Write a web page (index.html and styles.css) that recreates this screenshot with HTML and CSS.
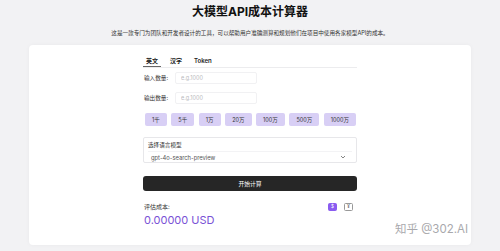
FILE: index.html
```html
<!DOCTYPE html>
<html lang="zh-CN">
<head>
    <meta charset="UTF-8">
    <meta name="viewport" content="width=device-width, initial-scale=1.0">
    <title>大模型API成本计算器</title>
    <link rel="stylesheet" href="styles.css">
</head>
<body>
    <div class="page">
        <header class="header">
            <h1>大模型API成本计算器</h1>
            <p class="intro">这是一款专门为团队和开发者设计的工具，可以帮助用户准确测算和规划他们在项目中使用各家模型API的成本。</p>
        </header>

        <div class="card">
            <div class="calc">
                <div class="tabs">
                    <span class="tab active">英文</span>
                    <span class="tab">汉字</span>
                    <span class="tab">Token</span>
                </div>

                <div class="field">
                    <label for="input-count">输入数量:</label>
                    <input id="input-count" type="text" placeholder="e.g.1000">
                </div>
                <div class="field">
                    <label for="output-count">输出数量:</label>
                    <input id="output-count" type="text" placeholder="e.g.1000">
                </div>

                <div class="presets">
                    <button class="preset">1千</button>
                    <button class="preset">5千</button>
                    <button class="preset">1万</button>
                    <button class="preset">20万</button>
                    <button class="preset">100万</button>
                    <button class="preset">500万</button>
                    <button class="preset">1000万</button>
                </div>

                <div class="model-box">
                    <span class="model-label">选择语言模型</span>
                    <div class="model-select">
                        <span>gpt-4o-search-preview</span>
                        <svg class="chevron" width="6" height="4" viewBox="0 0 6 4"><path d="M1 1l2 2 2-2" fill="none" stroke="#777" stroke-width="0.9"/></svg>
                    </div>
                </div>

                <button class="start-btn">开始计算</button>

                <div class="result">
                    <div class="result-text">
                        <span class="result-label">评估成本:</span>
                        <span class="result-value">0.00000 USD</span>
                    </div>
                    <div class="currency">
                        <span class="cur active">$</span>
                        <span class="cur">¥</span>
                    </div>
                </div>
            </div>
        </div>

        <div class="watermark">知乎 @302.AI</div>
    </div>
</body>
</html>
```

FILE: styles.css
```css
* {
    margin: 0;
    padding: 0;
    box-sizing: border-box;
}

:root {
    --bg: #f2f2f4;
    --surface: #ffffff;
    --text: #222222;
    --muted: #b9b9bd;
    --border: #ececee;
    --purple: #7a52d6;
    --purple-light: #d8cff5;
}

body {
    font-family: Inter, "Noto Sans CJK SC", sans-serif;
    color: var(--text);
    background: var(--bg);
    width: 500px;
    height: 251px;
    overflow: hidden;
}

.page {
    position: relative;
    height: 251px;
}

.header {
    text-align: center;
    padding-top: 4px;
}

.header h1 {
    font-size: 12px;
    font-weight: 700;
    line-height: 16px;
    color: #111;
}

.intro {
    font-size: 5.6px;
    line-height: 8px;
    margin-top: 9px;
    color: #333;
}

.card {
    margin: 8px 29px 0;
    height: 200px;
    background: var(--surface);
    border-radius: 4px;
    box-shadow: 0 0 4px rgba(0, 0, 0, 0.04);
    padding: 10px 0 0;
}

.calc {
    width: 214px;
    margin: 0 auto;
    display: flex;
    flex-direction: column;
}

.tabs {
    display: flex;
    gap: 6px;
    border-bottom: 1px solid var(--border);
    height: 13px;
}

.tab {
    font-size: 6px;
    font-weight: 600;
    line-height: 12px;
    padding: 0 3px;
    color: #222;
}

.tab.active {
    border-bottom: 1px solid #666;
}

.field {
    display: flex;
    align-items: center;
    gap: 6px;
    margin-top: 4px;
    height: 12px;
    padding-left: 1px;
}

.field + .field {
    margin-top: 8px;
}

.field label {
    font-size: 5.6px;
    color: #333;
    width: 25px;
    white-space: nowrap;
    flex-shrink: 0;
}

.field input {
    width: 82px;
    height: 12px;
    border: 1px solid #f1f1f3;
    border-radius: 2px;
    padding: 0 5px;
    font-family: inherit;
    font-size: 5.5px;
    outline: none;
}

.field input::placeholder {
    color: var(--muted);
}

.presets {
    display: flex;
    justify-content: space-between;
    padding: 0 1px 0 2px;
    margin-top: 9px;
}

.preset {
    border: none;
    background: var(--purple-light);
    border-radius: 2px;
    height: 13px;
    padding: 0 7px;
    font-family: inherit;
    font-size: 5.5px;
    color: #333;
}

.model-box {
    margin-top: 11px;
    height: 26px;
    border: 1px solid #e7e7ea;
    border-radius: 2px;
    padding: 3px 4px 0;
    display: flex;
    flex-direction: column;
}

.model-label {
    font-size: 5.6px;
    line-height: 8px;
    color: #333;
}

.model-select {
    display: flex;
    justify-content: space-between;
    align-items: center;
    margin-top: 2px;
    padding: 0 6px 0 3px;
    height: 11px;
    border-top: 1px solid #f3f3f5;
    font-size: 5.8px;
    color: #555;
}

.start-btn {
    margin-top: 13px;
    height: 15px;
    border: none;
    border-radius: 3px;
    background: #262626;
    color: #fff;
    font-family: inherit;
    font-size: 5.8px;
}

.result {
    display: flex;
    justify-content: space-between;
    align-items: flex-start;
    margin-top: 12px;
    padding: 0 4px 0 1px;
}

.result-text {
    display: flex;
    flex-direction: column;
    gap: 2px;
}

.result-label {
    font-size: 6px;
    line-height: 8px;
    color: #333;
}

.result-value {
    font-size: 11px;
    line-height: 14px;
    color: var(--purple);
}

.currency {
    display: flex;
    gap: 7px;
}

.cur {
    width: 9px;
    height: 8px;
    border: 1px solid #999;
    border-radius: 1.5px;
    font-size: 4.5px;
    line-height: 6px;
    text-align: center;
    color: #333;
}

.cur.active {
    background: #8a5cf0;
    border-color: #8a5cf0;
    color: #fff;
}

.watermark {
    position: absolute;
    left: 395px;
    top: 220px;
    font-size: 11.5px;
    color: #9a9a9e;
    opacity: 0.85;
}
```
